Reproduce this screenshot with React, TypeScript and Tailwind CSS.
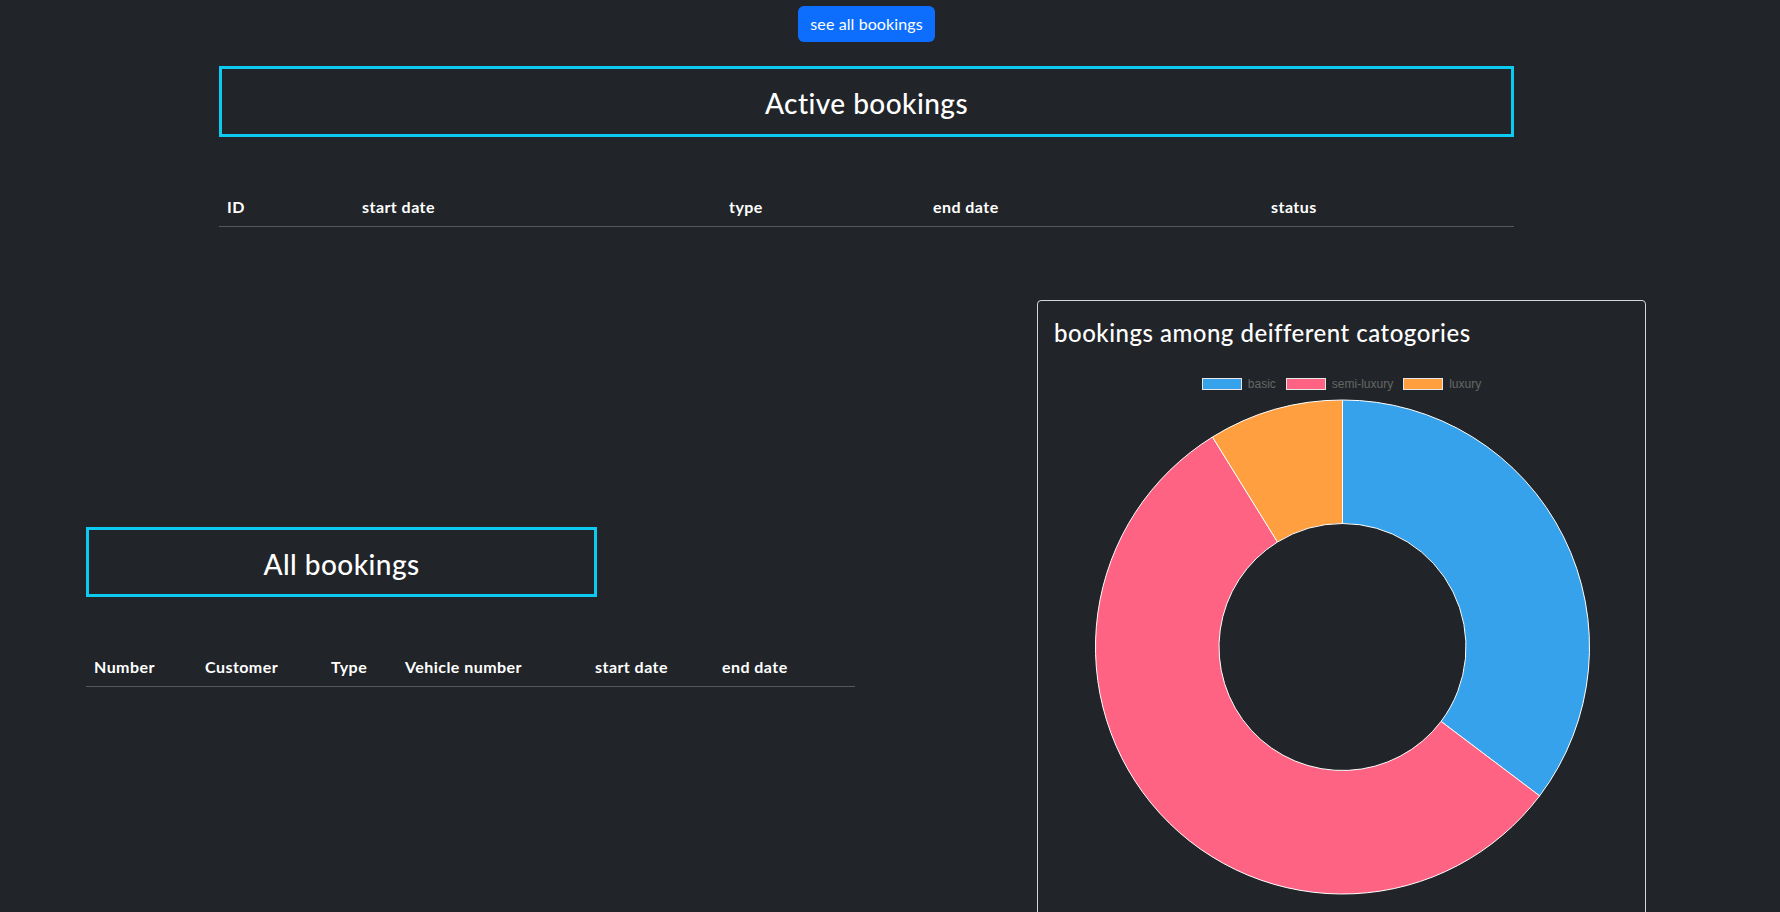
const activeCols = [
  { label: "ID", w: 135 },
  { label: "start date", w: 367 },
  { label: "type", w: 204 },
  { label: "end date", w: 338 },
  { label: "status", w: 251 },
];

const allCols = [
  { label: "Number", w: 111 },
  { label: "Customer", w: 126 },
  { label: "Type", w: 74 },
  { label: "Vehicle number", w: 190 },
  { label: "start date", w: 127 },
  { label: "end date", w: 141 },
];

const categories = [
  { label: "basic", value: 12, color: "#36a2eb" },
  { label: "semi-luxury", value: 19, color: "#ff6384" },
  { label: "luxury", value: 3, color: "#ff9f40" },
];

function HeaderTable({ cols }: { cols: { label: string; w: number }[] }) {
  return (
    <table className="w-full table-fixed border-collapse">
      <colgroup>
        {cols.map((c) => (
          <col key={c.label} style={{ width: c.w }} />
        ))}
      </colgroup>
      <thead>
        <tr className="border-b border-[#55595e]">
          {cols.map((c) => (
            <th key={c.label} className="px-2 pt-[9px] pb-[7px] text-left text-[16px] font-bold leading-6 tracking-[0.45px] text-white">
              {c.label}
            </th>
          ))}
        </tr>
      </thead>
      <tbody></tbody>
    </table>
  );
}

function Donut() {
  const cx = 288.5;
  const cy = 253;
  const R = 247;
  const r = 123.5;
  const total = categories.reduce((s, c) => s + c.value, 0);
  const pt = (rad: number, deg: number) => {
    const a = (deg * Math.PI) / 180;
    return `${(cx + rad * Math.sin(a)).toFixed(2)} ${(cy - rad * Math.cos(a)).toFixed(2)}`;
  };
  let start = 0;
  return (
    <svg width="577" height="510" className="block">
      {categories.map((c) => {
        const sweep = (c.value / total) * 360;
        const end = start + sweep;
        const large = sweep > 180 ? 1 : 0;
        const d = `M ${pt(R, start)} A ${R} ${R} 0 ${large} 1 ${pt(R, end)} L ${pt(r, end)} A ${r} ${r} 0 ${large} 0 ${pt(r, start)} Z`;
        start = end;
        return <path key={c.label} d={d} fill={c.color} stroke="#fff" strokeWidth="1" />;
      })}
    </svg>
  );
}

export default function App() {
  return (
    <div className="h-[912px] overflow-hidden bg-[#212529] font-['Lato',sans-serif] text-white">
      <div className="ml-[219px] flex w-[1295px] flex-col">
        <button className="mt-[6px] self-center rounded-md bg-[#0d6efd] px-3 py-[6px] text-[16px] leading-6 tracking-[0.1px] text-white">
          see all bookings
        </button>
        <div className="mt-6 flex h-[71px] items-center justify-center border-[3px] border-[#0dcaf0]">
          <h3 className="pt-[4px] text-[28px] font-medium leading-tight tracking-[0.45px]">Active bookings</h3>
        </div>
        <div className="mt-[49px]">
          <HeaderTable cols={activeCols} />
        </div>
      </div>

      <div className="mt-[73px] flex items-start">
        <div className="ml-[86px] mt-[227px] w-[769px]">
          <div className="flex h-[70px] w-[511px] items-center justify-center border-[3px] border-[#0dcaf0]">
            <h3 className="pt-[4px] text-[28px] font-medium leading-tight tracking-[0.45px]">All bookings</h3>
          </div>
          <div className="mt-[49px]">
            <HeaderTable cols={allCols} />
          </div>
        </div>

        <div className="ml-[182px] h-[700px] w-[609px] rounded-[4px] border border-[#d6d6d6] px-4 pt-[17px]">
          <h4 className="text-[24px] font-medium leading-tight tracking-[0.5px]">bookings among deifferent catogories</h4>
          <div className="mt-[29px] flex justify-center gap-[10px] font-['Liberation_Sans',Arial,sans-serif] text-[12px] text-[#666]">
            {categories.map((c) => (
              <div key={c.label} className="flex items-center gap-[6px]">
                <span className="block h-[12px] w-[40px] border border-[#e6e6e6]" style={{ backgroundColor: c.color }} />
                <span className="leading-[14px]">{c.label}</span>
              </div>
            ))}
          </div>
          <div className="mt-[3px]">
            <Donut />
          </div>
        </div>
      </div>
    </div>
  );
}
